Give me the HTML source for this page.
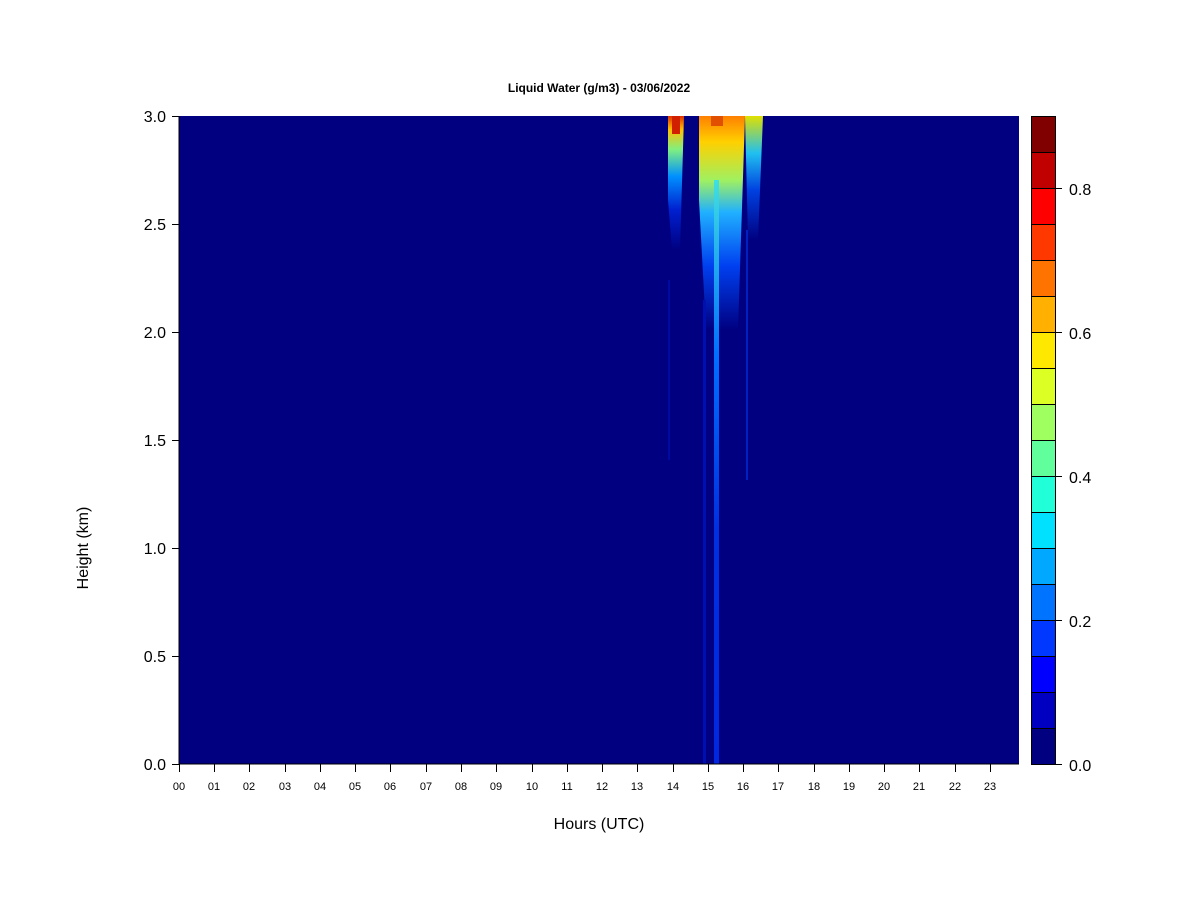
<!DOCTYPE html>
<html><head><meta charset="utf-8"><style>
body{margin:0;background:#fff;width:1200px;height:900px;overflow:hidden;font-family:"Liberation Sans",Arial,sans-serif}
</style></head><body>
<svg width="1200" height="900" xmlns="http://www.w3.org/2000/svg" font-family="Liberation Sans, Arial, sans-serif">
<defs>
<linearGradient id="g1" x1="0" y1="0" x2="0" y2="1">
<stop offset="0" stop-color="#e03000"/><stop offset="0.1" stop-color="#ffc000"/><stop offset="0.25" stop-color="#80f080"/><stop offset="0.45" stop-color="#0090ff"/><stop offset="0.7" stop-color="#0020d0"/><stop offset="1" stop-color="#000080"/></linearGradient>
<linearGradient id="g2" x1="0" y1="0" x2="0" y2="1">
<stop offset="0" stop-color="#ff8000"/><stop offset="0.12" stop-color="#ffd000"/><stop offset="0.3" stop-color="#a0f060"/><stop offset="0.45" stop-color="#20b0ff"/><stop offset="0.7" stop-color="#0040f0"/><stop offset="1" stop-color="#000080"/></linearGradient>
<linearGradient id="g3" x1="0" y1="0" x2="0" y2="1">
<stop offset="0" stop-color="#e0e000"/><stop offset="0.3" stop-color="#20c0f0"/><stop offset="0.6" stop-color="#0040e0"/><stop offset="1" stop-color="#000080"/></linearGradient>
<linearGradient id="g4" x1="0" y1="0" x2="0" y2="1">
<stop offset="0" stop-color="#40e0e0"/><stop offset="0.3" stop-color="#0070ff"/><stop offset="0.6" stop-color="#0030e0"/><stop offset="1" stop-color="#0028e0"/></linearGradient>
</defs>
<rect x="1031" y="-2" width="24" height="2" fill="#000"/>
<text x="599" y="92" font-size="12" font-weight="bold" text-anchor="middle">Liquid Water (g/m3) - 03/06/2022</text>
<rect x="179" y="116" width="840" height="648" fill="#000080"/>
<!-- plumes -->
<polygon points="668,116 684,116 680,250 672,250 668,200" fill="url(#g1)"/>
<polygon points="699,116 745,116 738,330 706,330 699,200" fill="url(#g2)"/>
<polygon points="745,116 763,116 758,240 748,240" fill="url(#g3)"/>
<rect x="714" y="180" width="5" height="584" fill="url(#g4)"/>
<rect x="703" y="300" width="3" height="464" fill="#0010b0"/>
<rect x="746" y="230" width="2" height="250" fill="#0020c0"/>
<rect x="668" y="280" width="2" height="180" fill="#000aa0"/>
<rect x="672" y="116" width="8" height="18" fill="#d02000"/>
<rect x="711" y="116" width="12" height="10" fill="#e05000"/>
<g stroke="#000" stroke-width="1">
<line x1="179" y1="764" x2="179" y2="116"/>
<line x1="179" y1="764" x2="1019" y2="764"/>
</g>
<g stroke="#000" stroke-width="1">
<line x1="172" y1="116.5" x2="179" y2="116.5"/><line x1="172" y1="224.5" x2="179" y2="224.5"/><line x1="172" y1="332.5" x2="179" y2="332.5"/><line x1="172" y1="440.5" x2="179" y2="440.5"/><line x1="172" y1="548.5" x2="179" y2="548.5"/><line x1="172" y1="656.5" x2="179" y2="656.5"/><line x1="172" y1="764.5" x2="179" y2="764.5"/>
</g>
<g font-size="16" text-anchor="end">
<text x="166" y="122">3.0</text><text x="166" y="230">2.5</text><text x="166" y="338">2.0</text><text x="166" y="446">1.5</text><text x="166" y="554">1.0</text><text x="166" y="662">0.5</text><text x="166" y="770">0.0</text>
</g>
<text x="599" y="829" font-size="16" text-anchor="middle">Hours (UTC)</text>
<text transform="translate(88,548) rotate(-90)" font-size="16" text-anchor="middle">Height (km)</text>
<g stroke="#000" stroke-width="1">
<rect x="1031.5" y="116.5" width="24" height="36" fill="#800000"/>
<rect x="1031.5" y="152.5" width="24" height="36" fill="#c00000"/>
<rect x="1031.5" y="188.5" width="24" height="36" fill="#ff0000"/>
<rect x="1031.5" y="224.5" width="24" height="36" fill="#ff3800"/>
<rect x="1031.5" y="260.5" width="24" height="36" fill="#ff7400"/>
<rect x="1031.5" y="296.5" width="24" height="36" fill="#ffb000"/>
<rect x="1031.5" y="332.5" width="24" height="36" fill="#ffe800"/>
<rect x="1031.5" y="368.5" width="24" height="36" fill="#dcff24"/>
<rect x="1031.5" y="404.5" width="24" height="36" fill="#a0ff60"/>
<rect x="1031.5" y="440.5" width="24" height="36" fill="#60ff9c"/>
<rect x="1031.5" y="476.5" width="24" height="36" fill="#20ffd8"/>
<rect x="1031.5" y="512.5" width="24" height="36" fill="#00e0ff"/>
<rect x="1031.5" y="548.5" width="24" height="36" fill="#00a8ff"/>
<rect x="1031.5" y="584.5" width="24" height="36" fill="#0074ff"/>
<rect x="1031.5" y="620.5" width="24" height="36" fill="#0038ff"/>
<rect x="1031.5" y="656.5" width="24" height="36" fill="#0000ff"/>
<rect x="1031.5" y="692.5" width="24" height="36" fill="#0000c0"/>
<rect x="1031.5" y="728.5" width="24" height="36" fill="#000080"/>
<line x1="1055" y1="188.5" x2="1062" y2="188.5"/><line x1="1055" y1="332.5" x2="1062" y2="332.5"/><line x1="1055" y1="476.5" x2="1062" y2="476.5"/><line x1="1055" y1="620.5" x2="1062" y2="620.5"/><line x1="1055" y1="764.5" x2="1062" y2="764.5"/>
</g>
<g font-size="16">
<text x="1069" y="195">0.8</text><text x="1069" y="339">0.6</text><text x="1069" y="483">0.4</text><text x="1069" y="627">0.2</text><text x="1069" y="771">0.0</text>
</g>
<g stroke="#000" stroke-width="1">
<line x1="179.5" y1="764" x2="179.5" y2="772"/><line x1="214.5" y1="764" x2="214.5" y2="772"/><line x1="249.5" y1="764" x2="249.5" y2="772"/><line x1="285.5" y1="764" x2="285.5" y2="772"/><line x1="320.5" y1="764" x2="320.5" y2="772"/><line x1="355.5" y1="764" x2="355.5" y2="772"/><line x1="390.5" y1="764" x2="390.5" y2="772"/><line x1="426.5" y1="764" x2="426.5" y2="772"/><line x1="461.5" y1="764" x2="461.5" y2="772"/><line x1="496.5" y1="764" x2="496.5" y2="772"/><line x1="532.5" y1="764" x2="532.5" y2="772"/><line x1="567.5" y1="764" x2="567.5" y2="772"/><line x1="602.5" y1="764" x2="602.5" y2="772"/><line x1="637.5" y1="764" x2="637.5" y2="772"/><line x1="673.5" y1="764" x2="673.5" y2="772"/><line x1="708.5" y1="764" x2="708.5" y2="772"/><line x1="743.5" y1="764" x2="743.5" y2="772"/><line x1="778.5" y1="764" x2="778.5" y2="772"/><line x1="814.5" y1="764" x2="814.5" y2="772"/><line x1="849.5" y1="764" x2="849.5" y2="772"/><line x1="884.5" y1="764" x2="884.5" y2="772"/><line x1="919.5" y1="764" x2="919.5" y2="772"/><line x1="955.5" y1="764" x2="955.5" y2="772"/><line x1="990.5" y1="764" x2="990.5" y2="772"/>
</g>
<g font-size="11" text-anchor="middle">
<text x="179" y="790">00</text><text x="214" y="790">01</text><text x="249" y="790">02</text><text x="285" y="790">03</text><text x="320" y="790">04</text><text x="355" y="790">05</text><text x="390" y="790">06</text><text x="426" y="790">07</text><text x="461" y="790">08</text><text x="496" y="790">09</text><text x="532" y="790">10</text><text x="567" y="790">11</text><text x="602" y="790">12</text><text x="637" y="790">13</text><text x="673" y="790">14</text><text x="708" y="790">15</text><text x="743" y="790">16</text><text x="778" y="790">17</text><text x="814" y="790">18</text><text x="849" y="790">19</text><text x="884" y="790">20</text><text x="919" y="790">21</text><text x="955" y="790">22</text><text x="990" y="790">23</text>
</g>
</svg>
</body></html>
